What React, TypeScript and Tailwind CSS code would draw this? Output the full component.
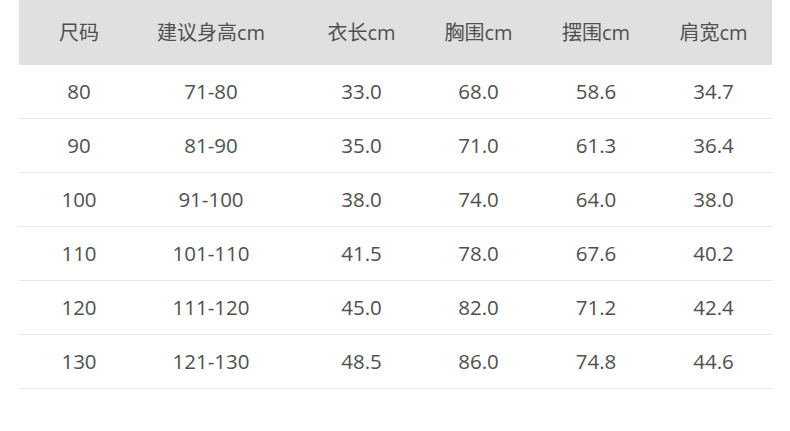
import React from "react";

const headers = ["尺码", "建议身高cm", "衣长cm", "胸围cm", "摆围cm", "肩宽cm"];
const rows = [
  ["80", "71-80", "33.0", "68.0", "58.6", "34.7"],
  ["90", "81-90", "35.0", "71.0", "61.3", "36.4"],
  ["100", "91-100", "38.0", "74.0", "64.0", "38.0"],
  ["110", "101-110", "41.5", "78.0", "67.6", "40.2"],
  ["120", "111-120", "45.0", "82.0", "71.2", "42.4"],
  ["130", "121-130", "48.5", "86.0", "74.8", "44.6"],
];

export default function App() {
  return (
    <div
      className="w-[790px] h-[431px] bg-white pl-[19px] pr-[18px] text-[#505050]"
      style={{ fontFamily: '"Open Sans", "Noto Sans CJK SC", sans-serif' }}
    >
      <div className="grid grid-cols-[120px_144px_137px_117px_118px_117px] h-[65px] bg-[#e0e0e0] items-center text-[20px]">
        {headers.map((h, j) => (
          <div key={h} className={j === 2 ? "text-center pl-[20px]" : "text-center"}>
            {h}
          </div>
        ))}
      </div>
      {rows.map((r, i) => (
        <div
          key={i}
          className="grid grid-cols-[120px_144px_137px_117px_118px_117px] h-[54px] border-b border-[#e6e6e6] items-center text-[20.5px]"
        >
          {r.map((c, j) => (
            <div key={j} className={j === 2 ? "text-center pl-[20px]" : "text-center"}>
              {c}
            </div>
          ))}
        </div>
      ))}
    </div>
  );
}
